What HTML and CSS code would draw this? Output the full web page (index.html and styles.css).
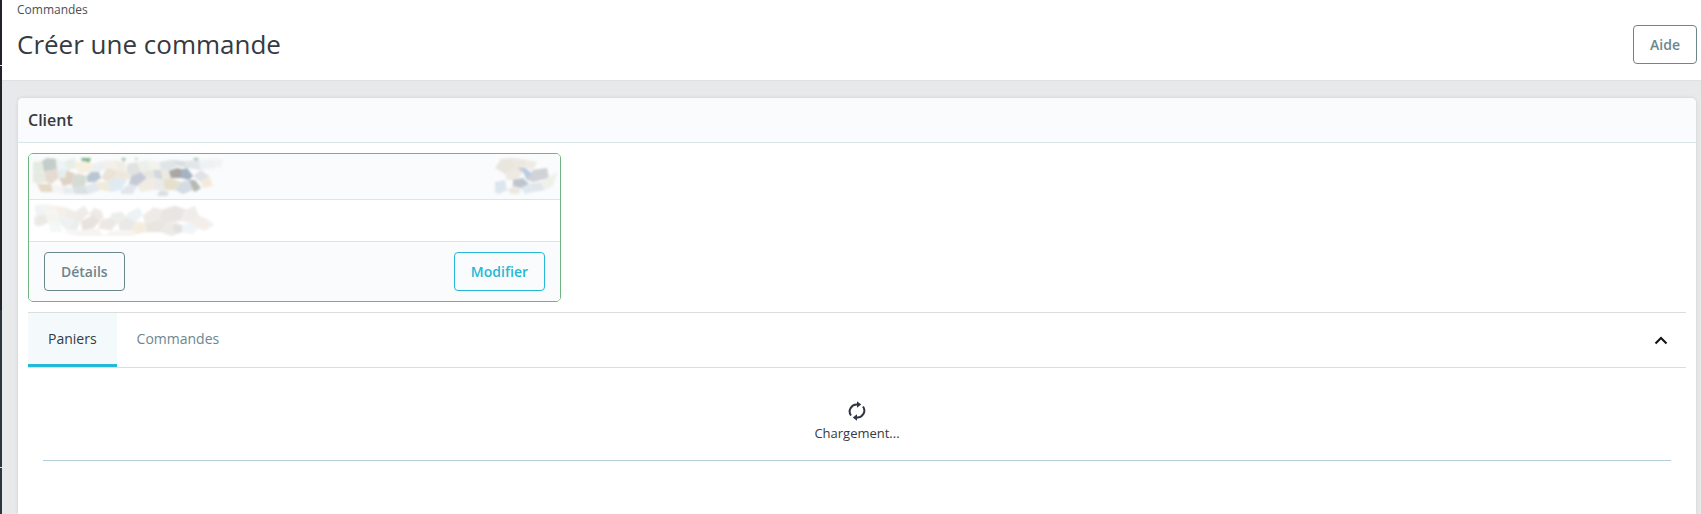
FILE: index.html
```html
<!DOCTYPE html>
<html lang="fr">
  <head>
    <meta charset="UTF-8" />
    <title>Créer une commande</title>
    <link rel="stylesheet" href="styles.css">
  </head>
  <body>
    <div class="sidebar-edge"></div>
    <div class="content">
      <header class="page-head">
        <div class="breadcrumb">Commandes</div>
        <div class="title-row">
          <h1>Créer une commande</h1>
          <button class="btn btn-grey btn-help">Aide</button>
        </div>
      </header>

      <main class="page-body">
        <section class="card">
          <h2 class="card-head">Client</h2>
          <div class="card-body">
            <div class="customer">
              <div class="customer-row customer-name">
                <!-- blurred-out customer name -->
                <svg class="redacted" width="531" height="44" viewBox="0 0 531 44">
                  <g>
                    <polygon points="52,4 62,4 60,9 54,9" fill="#7fb589"/>
                    <polygon points="92,4 97,4 95,8" fill="#9cc7a5"/>
                    <polygon points="106,4 109,4 107,7" fill="#b6d6bc"/>
                    <polygon points="164,4 170,4 167,8" fill="#a0caa8"/>
                    <polygon points="4,8 13,7 15,17 4,19" fill="#e4ebe3"/>
                    <polygon points="13,7 18,4 27,5 28,15 18,17 15,17" fill="#c3cdca"/>
                    <polygon points="27,5 36,7 38,16 28,15" fill="#eef3f3"/>
                    <polygon points="36,7 46,4 47,14 38,16" fill="#e8ede6"/>
                    <polygon points="47,14 46,8 56,7 64,10 62,18 50,20" fill="#f6f0e2"/>
                    <polygon points="64,10 74,7 78,14 70,18 62,18" fill="#eceff1"/>
                    <polygon points="74,7 86,6 88,16 78,14" fill="#f3f0ea"/>
                    <polygon points="86,6 96,8 98,18 88,16" fill="#f1ede4"/>
                    <polygon points="98,10 108,8 112,18 102,22 98,18" fill="#dfe3e2"/>
                    <polygon points="108,8 118,6 124,16 112,18" fill="#ecf0ea"/>
                    <polygon points="118,6 130,8 132,16 124,16" fill="#f3f3ec"/>
                    <polygon points="130,8 142,6 148,12 140,17 132,16" fill="#dfe5e6"/>
                    <polygon points="142,6 156,7 158,14 148,12" fill="#d9dfe1"/>
                    <polygon points="156,7 170,6 172,16 158,14" fill="#e2e6e8"/>
                    <polygon points="170,6 186,5 188,14 172,16" fill="#eff2f3"/>
                    <polygon points="186,5 194,5 192,13 188,14" fill="#f2f4f4"/>
                    <polygon points="4,19 15,17 17,28 8,30 4,28" fill="#e6ebe2"/>
                    <polygon points="15,17 28,15 30,24 22,30 17,28" fill="#e6dbd2"/>
                    <polygon points="28,15 38,16 36,24 30,24" fill="#e3eeee"/>
                    <polygon points="30,24 36,24 38,16 46,20 42,30 34,32" fill="#e0d2c4"/>
                    <polygon points="46,20 50,20 58,22 56,32 44,34 42,30" fill="#d6dcd3"/>
                    <polygon points="58,22 62,18 70,18 72,24 66,28 58,28" fill="#b9c6d2"/>
                    <polygon points="72,24 78,14 88,16 86,24 78,28" fill="#ebe3d6"/>
                    <polygon points="88,16 98,18 102,22 98,26 86,24" fill="#eee7de"/>
                    <polygon points="102,22 112,18 118,24 108,32 100,30" fill="#c5cbd6"/>
                    <polygon points="112,18 124,16 126,24 118,24" fill="#e8e7e2"/>
                    <polygon points="124,16 132,16 134,26 126,24" fill="#d5d8da"/>
                    <polygon points="134,26 132,16 140,17 142,24" fill="#ebe9e0"/>
                    <polygon points="140,17 148,14 156,16 152,24 142,24" fill="#a9a6a3"/>
                    <polygon points="152,16 158,14 164,22 160,26 152,24" fill="#a5b2c2"/>
                    <polygon points="164,22 172,16 180,22 172,28" fill="#e0e3e5"/>
                    <polygon points="172,28 180,22 184,32 174,34" fill="#f3ead9"/>
                    <polygon points="8,30 22,30 24,38 12,38" fill="#e5d9c8"/>
                    <polygon points="22,30 34,32 34,40 24,38" fill="#f4f4f2"/>
                    <polygon points="34,32 44,34 46,40 34,40" fill="#eaedf0"/>
                    <polygon points="44,34 56,32 60,40 46,40" fill="#d9dfe4"/>
                    <polygon points="56,32 66,28 72,36 60,40" fill="#e3e8ee"/>
                    <polygon points="66,28 78,28 82,38 72,36" fill="#f1ead9"/>
                    <polygon points="78,28 86,24 98,26 92,36 82,38" fill="#dfeaf2"/>
                    <polygon points="92,36 100,30 108,32 104,40 92,40" fill="#e2e6ec"/>
                    <polygon points="108,32 118,24 126,24 124,36 112,38" fill="#f0ece4"/>
                    <polygon points="124,36 126,24 134,26 136,36" fill="#eaeaea"/>
                    <polygon points="136,36 134,26 142,24 152,28 146,36" fill="#e5e0cc"/>
                    <polygon points="146,36 152,28 160,26 164,36 154,40" fill="#d5dbe3"/>
                    <polygon points="160,26 166,26 172,34 166,38 164,36" fill="#b7b9b4"/>
                    <polygon points="128,40 132,36 140,38 138,42 130,42" fill="#dcdfe2"/>
                  </g>
                  <g>
                    <polygon points="466,14 472,5 484,4 488,14 476,20" fill="#e8e6df"/>
                    <polygon points="484,4 498,6 496,14 488,14" fill="#ece8df"/>
                    <polygon points="498,6 508,8 504,16 496,14" fill="#eeebe6"/>
                    <polygon points="476,20 488,14 494,18 488,26 478,26" fill="#eee9e2"/>
                    <polygon points="488,14 496,14 504,20 498,26 494,18" fill="#bacbe0"/>
                    <polygon points="504,16 518,14 520,24 504,28 498,26" fill="#cfd2d6"/>
                    <polygon points="484,26 494,24 500,30 492,34 484,32" fill="#bec5cc"/>
                    <polygon points="500,30 512,28 516,36 504,38" fill="#e1e6ea"/>
                    <polygon points="466,28 476,26 478,36 470,40 466,38" fill="#dce6ee"/>
                    <polygon points="478,36 484,32 492,34 490,40 482,40" fill="#ece9e3"/>
                    <polygon points="492,34 500,30 504,38 496,40" fill="#dde8f2"/>
                    <polygon points="518,24 528,18 524,32 516,36 512,28" fill="#f0f0ea"/>
                  </g>
                </svg>
              </div>
              <div class="customer-row">
                <svg class="redacted redacted-pale" width="531" height="41" viewBox="0 0 531 41">
                  <g transform="scale(0.89 0.95)">
                    <polygon points="6,6 16,4 18,14 8,18" fill="#eef2f4"/>
                    <polygon points="16,4 30,6 32,14 18,14" fill="#f5f2ee"/>
                    <polygon points="30,6 42,8 40,18 32,14" fill="#f4ece4"/>
                    <polygon points="42,8 52,12 50,22 40,18" fill="#eceae5"/>
                    <polygon points="52,12 62,6 68,14 58,22 50,22" fill="#ece8e4"/>
                    <polygon points="68,14 74,8 82,12 84,20 72,24" fill="#ebe6e2"/>
                    <polygon points="6,18 18,14 22,24 12,28 6,26" fill="#e9e7e2"/>
                    <polygon points="18,14 32,14 34,24 22,24" fill="#f2f3ee"/>
                    <polygon points="32,14 40,18 50,22 42,32 34,24" fill="#edefef"/>
                    <polygon points="22,24 34,24 38,34 24,34" fill="#f4f6f7"/>
                    <polygon points="50,22 58,22 54,32 42,32" fill="#e9ecec"/>
                    <polygon points="58,22 72,16 80,22 72,30 60,32" fill="#e3ded9"/>
                    <polygon points="80,22 92,18 100,24 92,32 78,30" fill="#eae4df"/>
                    <polygon points="92,14 104,12 110,18 100,24 92,18" fill="#e9ece9"/>
                    <polygon points="100,24 110,18 120,22 116,32 102,32" fill="#e6e6e3"/>
                    <polygon points="110,14 124,8 128,16 120,22 110,18" fill="#eaf0f3"/>
                    <polygon points="116,32 120,22 130,24 132,34 120,36" fill="#f3ebd9"/>
                    <polygon points="128,16 140,8 150,10 146,20 130,24" fill="#ece7e1"/>
                    <polygon points="130,24 146,20 156,24 148,34 132,34" fill="#e6e2dc"/>
                    <polygon points="148,34 156,24 168,24 172,34 160,38" fill="#e9e6e2"/>
                    <polygon points="162,26 172,26 172,34 164,34" fill="#dcdcdc"/>
                    <polygon points="150,10 164,6 176,10 170,22 156,24 146,20" fill="#e4e1dd"/>
                    <polygon points="176,10 186,6 192,18 180,24 170,22" fill="#edebe7"/>
                    <polygon points="172,26 180,24 190,30 184,36 172,34" fill="#edf3f7"/>
                    <polygon points="190,16 200,20 208,26 198,32 190,30 180,24" fill="#f1ece6"/>
                    <polygon points="38,34 60,32 78,30 84,38 54,38" fill="#f5f2ef"/>
                    <polygon points="84,38 92,32 116,32 120,38" fill="#f5f3f0"/>
                  </g>
                </svg>
              </div>
              <div class="customer-row customer-actions">
                <button class="btn btn-grey">Détails</button>
                <button class="btn btn-info">Modifier</button>
              </div>
            </div>

            <div class="tabs">
              <a class="tab active">Paniers</a>
              <a class="tab">Commandes</a>
              <svg class="chevron" width="14" height="9" viewBox="0 0 14 9">
                <path d="M1.5 7.5 7 2l5.5 5.5" fill="none" stroke="#111" stroke-width="2"/>
              </svg>
            </div>

            <div class="loading">
              <svg class="spinner" width="18" height="20" viewBox="0 0 18 20">
                <path d="M3 14.5A7 7 0 0 1 9.5 3.5" fill="none" stroke="#2f3542" stroke-width="2"/>
                <path d="M9 .2l4.2 3.3L9 6.8z" fill="#2f3542"/>
                <path d="M15 5.5A7 7 0 0 1 8.5 16.5" fill="none" stroke="#2f3542" stroke-width="2"/>
                <path d="M9 19.8l-4.2-3.3L9 13.2z" fill="#2f3542"/>
              </svg>
              <span>Chargement...</span>
            </div>
            <hr class="separator" />
          </div>
        </section>
      </main>
    </div>
  </body>
</html>
```

FILE: styles.css
```css
* {
  margin: 0;
  padding: 0;
  box-sizing: border-box;
}

html,
body {
  height: 100%;
  overflow: hidden;
}

body {
  display: flex;
  font-family: "Open Sans", sans-serif;
  background-color: #e8e9ea;
  color: #363a41;
}

.sidebar-edge {
  width: 2px;
  background: linear-gradient(
    #202327 65px,
    #dfe1e2 65px,
    #dfe1e2 66px,
    #202327 66px,
    #202327 310px,
    #2f353c 310px,
    #2f353c 467px,
    #dfe1e2 467px,
    #dfe1e2 468px,
    #2f353c 468px
  );
}

.content {
  display: flex;
  flex-direction: column;
  flex: 1;
  min-width: 0;
}

.page-head {
  height: 81px;
  padding: 3px 4px 0 15px;
  background-color: white;
  border-bottom: 1px solid #dfe1e2;
}

.breadcrumb {
  font-size: 12px;
  line-height: 14px;
  color: #4a4f56;
}

.title-row {
  display: flex;
  align-items: flex-start;
  justify-content: space-between;
  margin-top: 9px;
}

h1 {
  font-size: 26px;
  font-weight: 400;
  line-height: 36px;
  color: #363a41;
}

.btn {
  height: 39px;
  padding: 0 16px;
  font-family: inherit;
  font-size: 14px;
  font-weight: 600;
  background-color: transparent;
  border: 1px solid;
  border-radius: 4px;
  cursor: pointer;
}

.btn-grey {
  color: #6c868e;
  border-color: #6c868e;
}

.btn-info {
  color: #25b9d7;
  border-color: #25b9d7;
}

.btn-help {
  margin-top: -1px;
  background-color: white;
}

.page-body {
  flex: 1;
  min-height: 0;
  padding: 17px 5px 0 16px;
}

.card {
  height: 100%;
  background-color: white;
  border-radius: 5px 5px 0 0;
  box-shadow: 0 0 4px rgba(0, 0, 0, 0.1);
}

.card-head {
  height: 45px;
  padding-left: 10px;
  font-size: 16px;
  font-weight: 600;
  line-height: 45px;
  color: #363a41;
  background-color: #fafbfc;
  border-bottom: 1px solid #dbe6e9;
  border-radius: 5px 5px 0 0;
}

.card-body {
  padding: 10px 10px 0;
}

.customer {
  width: 533px;
  background-color: white;
  border: 1px solid #70b580;
  border-radius: 5px;
  overflow: hidden;
}

.customer-row {
  height: 42px;
  border-bottom: 1px solid #dbe6e9;
}

.customer-name {
  height: 46px;
  background-color: #fafbfc;
}

.redacted {
  display: block;
  filter: blur(0.8px);
}

.redacted-pale {
  opacity: 0.85;
}

.customer-actions {
  display: flex;
  align-items: center;
  justify-content: space-between;
  height: 59px;
  padding: 0 15px;
  background-color: #fafbfc;
  border-bottom: none;
}

.tabs {
  display: flex;
  align-items: stretch;
  height: 56px;
  margin-top: 10px;
  border-top: 1px solid #dddddd;
  border-bottom: 1px solid #dddddd;
}

.tab {
  padding: 0 20px;
  font-size: 14px;
  line-height: 51px;
  color: #6c868e;
}

.tab.active {
  color: #363a41;
  background-color: #f4f9fb;
  border-bottom: 3px solid #25b9d7;
}

.chevron {
  align-self: center;
  margin-left: auto;
  margin-right: 18px;
}

.loading {
  display: flex;
  flex-direction: column;
  align-items: center;
  padding-top: 33px;
  font-size: 13px;
  line-height: 18px;
  color: #363a41;
}

.spinner {
  margin-bottom: 3px;
}

.separator {
  height: 1px;
  margin: 18px 15px 0;
  background-color: #b3cdd9;
  border: none;
}
```
